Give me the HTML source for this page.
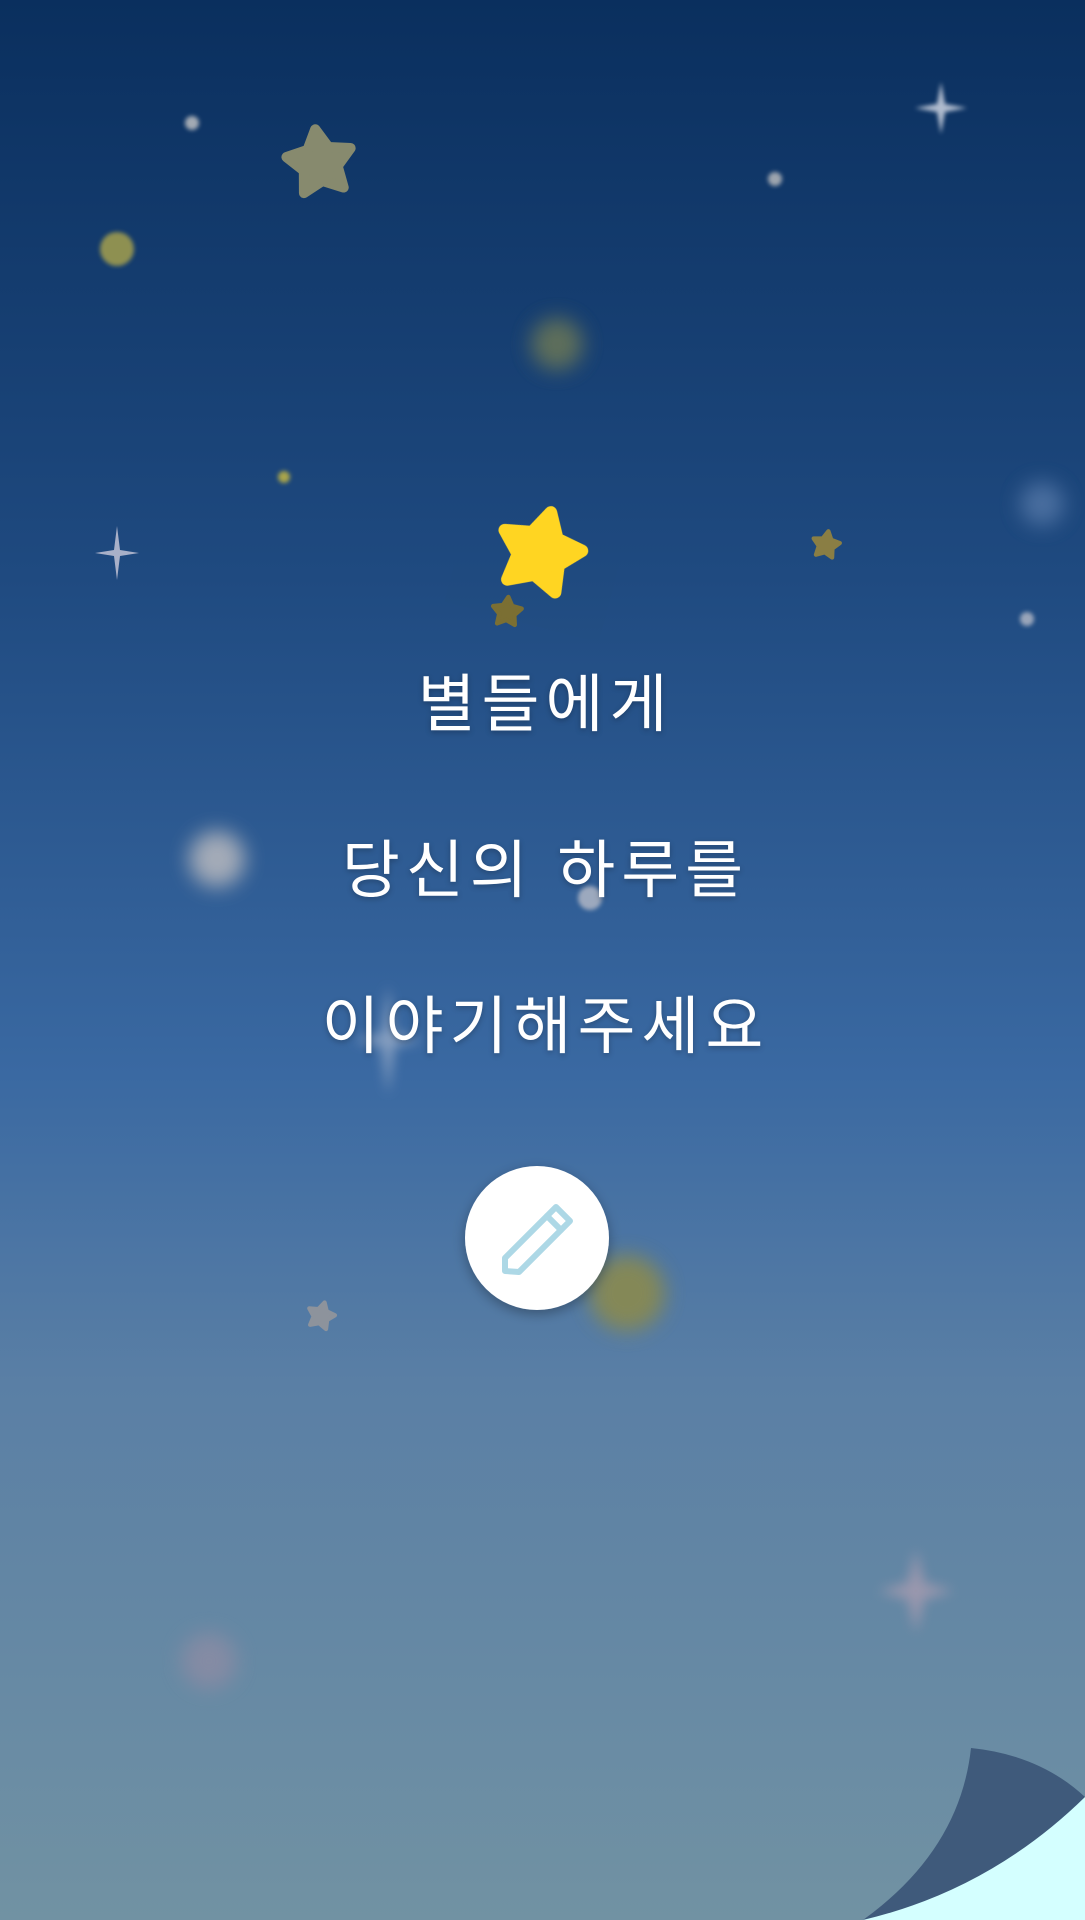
<!DOCTYPE html>
<html><head><meta charset="utf-8"><style>
html,body{margin:0;padding:0}
body{width:1085px;height:1920px;position:relative;overflow:hidden;background:linear-gradient(to bottom,#0a2f5e 0%,#1f4a80 30%,#3a69a2 56%,#5a7fa5 72%,#7192a3 100%);font-family:"Liberation Sans","Noto Sans CJK KR",sans-serif}
svg{position:absolute;left:0;top:0}
.t{position:absolute;left:0;width:1085px;text-align:center;color:#fff;font-size:63px;letter-spacing:6px;text-indent:6px;line-height:80px;text-shadow:0 2px 6px rgba(0,0,0,0.25)}
</style></head><body>
<svg width="1085" height="1920" viewBox="0 0 1085 1920">
<defs>
<filter id="b2" x="-100%" y="-100%" width="300%" height="300%"><feGaussianBlur stdDeviation="2"/></filter>
<filter id="b6" x="-100%" y="-100%" width="300%" height="300%"><feGaussianBlur stdDeviation="6"/></filter>
<filter id="b10" x="-100%" y="-100%" width="300%" height="300%"><feGaussianBlur stdDeviation="10"/></filter>
<filter id="sh" x="-50%" y="-50%" width="200%" height="200%"><feDropShadow dx="0" dy="4" stdDeviation="6" flood-color="#000" flood-opacity="0.3"/></filter>
<path id="star" d="M0,-1 L0.31,-0.43 L0.951,-0.309 L0.5,0.16 L0.588,0.809 L0,0.53 L-0.588,0.809 L-0.5,0.16 L-0.951,-0.309 L-0.31,-0.43 Z"/>
</defs>
<circle cx="192" cy="123" r="7" fill="#c8c8c8" filter="url(#b2)" opacity="0.8"/>
<g transform="translate(320,163) rotate(-8) scale(34)"><use href="#star" fill="#878a6e" stroke="#878a6e" stroke-width="0.3" stroke-linejoin="round"/></g>
<circle cx="117" cy="249" r="17" fill="#9c9a50" filter="url(#b2)" opacity="0.9"/>
<g transform="translate(941,108)" fill="#d8dde8" filter="url(#b2)" opacity="0.8"><path d="M0,-26 L4,-4 L26,0 L4,4 L0,26 L-4,4 L-26,0 L-4,-4 Z"/></g>
<circle cx="775" cy="179" r="7" fill="#c0c0c0" filter="url(#b2)" opacity="0.8"/>
<circle cx="557" cy="344" r="26" fill="#6f7a55" filter="url(#b10)" opacity="0.8"/>
<circle cx="284" cy="477" r="6" fill="#a8a44c" filter="url(#b2)"/>
<g transform="translate(117,553)" fill="#a8b0c8"><path d="M0,-27 L3,-3 L22,0 L3,3 L0,27 L-3,3 L-22,0 L-3,-3 Z"/></g>
<g transform="translate(826,545) rotate(10) scale(14)"><use href="#star" fill="#8a7e44" stroke="#8a7e44" stroke-width="0.3" stroke-linejoin="round"/></g>
<circle cx="1042" cy="504" r="22" fill="#5478a8" filter="url(#b10)" opacity="0.8"/>
<circle cx="1027" cy="619" r="7" fill="#b8bcc8" filter="url(#b2)" opacity="0.8"/>
<circle cx="217" cy="859" r="28" fill="#b0b4bc" filter="url(#b10)" opacity="0.9"/>
<circle cx="590" cy="898" r="12" fill="#b8bcc8" filter="url(#b2)" opacity="0.8"/>
<g transform="translate(388,1040)" fill="#c0c8d8" filter="url(#b6)" opacity="0.6"><path d="M0,-55 L6,-6 L35,0 L6,6 L0,55 L-6,6 L-35,0 L-6,-6 Z"/></g>
<circle cx="627" cy="1293" r="38" fill="#8a8a50" filter="url(#b10)" opacity="0.9"/>
<g transform="translate(321,1316) rotate(15) scale(14)"><use href="#star" fill="#8d939c" stroke="#8d939c" stroke-width="0.3" stroke-linejoin="round"/></g>
<g transform="translate(916,1591)" fill="#a89cb0" filter="url(#b6)" opacity="0.8"><path d="M0,-42 L8,-8 L38,0 L8,8 L0,42 L-8,8 L-38,0 L-8,-8 Z"/></g>
<circle cx="209" cy="1661" r="28" fill="#8c8ca4" filter="url(#b10)" opacity="0.8"/>
<g transform="translate(540,553) rotate(15) scale(42)" filter="url(#sh)"><use href="#star" fill="#ffd524" stroke="#ffd524" stroke-width="0.3" stroke-linejoin="round"/></g>
<g transform="translate(507,612) rotate(5) scale(15)"><use href="#star" fill="#7b6f33" stroke="#7b6f33" stroke-width="0.3" stroke-linejoin="round"/></g>
<circle cx="537" cy="1238" r="72" fill="#fff" filter="url(#sh)"/>
<g fill="none" stroke="#add8e6" stroke-width="6" stroke-linejoin="round" stroke-linecap="round">
<path d="M505,1271 L505,1258 L556,1207 L570,1221 L519,1272 Z"/>
<path d="M547,1216 L561,1230"/>
</g>
<path d="M971,1748 Q1040,1755 1085,1797 L1085,1920 L863,1920 Q960,1850 971,1748 Z" fill="#3f5a7b"/>
<path d="M863,1920 Q990,1890 1085,1797 L1085,1920 Z" fill="#d4ffff"/>
</svg>
<div class="t" style="top:665px">별들에게</div>
<div class="t" style="top:831px">당신의 하루를</div>
<div class="t" style="top:987px">이야기해주세요</div>
</body></html>
